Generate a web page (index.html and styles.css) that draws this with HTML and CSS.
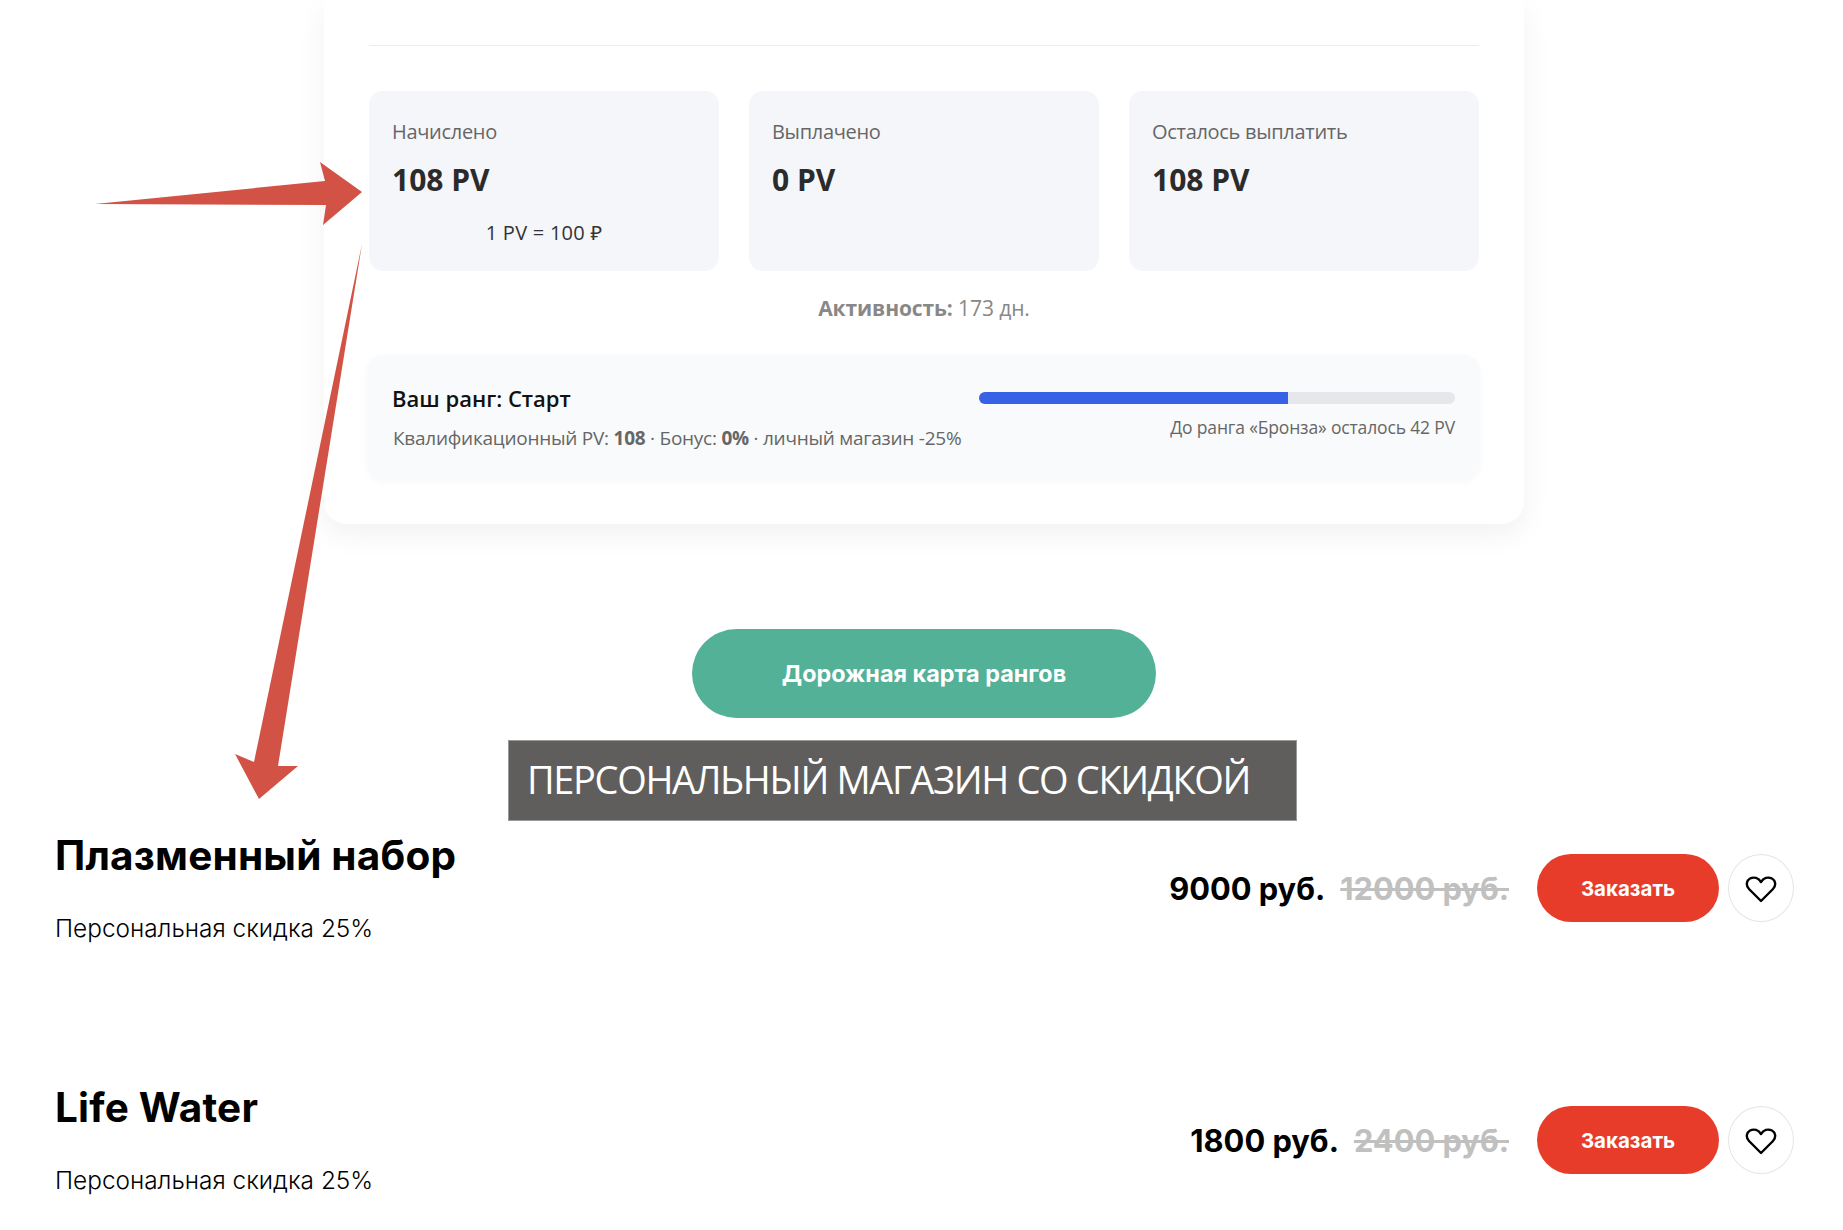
FILE: index.html
```html
<!DOCTYPE html>
<html lang="ru">
	<head>
		<meta charset="utf-8" />
		<title>Личный кабинет</title>
		<link rel="stylesheet" href="styles.css">
	</head>

	<body>
		<div id="page">
			<div class="account">
				<div class="divider"></div>
				<ul class="stats">
					<li class="stat">
						<span class="stat-label">Начислено</span>
						<span class="stat-value">108 PV</span>
						<span class="stat-note">1 PV = 100 ₽</span>
					</li>
					<li class="stat">
						<span class="stat-label">Выплачено</span>
						<span class="stat-value">0 PV</span>
					</li>
					<li class="stat">
						<span class="stat-label">Осталось выплатить</span>
						<span class="stat-value">108 PV</span>
					</li>
				</ul>
				<p class="activity"><b>Активность:</b> 173 дн.</p>
				<div class="rank">
					<div class="rank-info">
						<div class="rank-title">Ваш ранг: Старт</div>
						<div class="rank-text">Квалификационный PV: <b>108</b> · Бонус: <b>0%</b> · личный магазин -25%</div>
					</div>
					<div class="rank-progress">
						<div class="bar"><div class="bar-fill" style="width: 65%"></div></div>
						<div class="rank-left">До ранга «Бронза» осталось 42 PV</div>
					</div>
				</div>
			</div>

			<a class="roadmap" href="#">Дорожная карта рангов</a>
			<div class="shop-label">ПЕРСОНАЛЬНЫЙ МАГАЗИН СО СКИДКОЙ</div>

			<div class="product">
				<div class="product-info">
					<h2>Плазменный набор</h2>
					<p>Персональная скидка 25%</p>
				</div>
				<div class="product-buy">
					<span class="price">9000 руб.</span>
					<span class="price-old">12000 руб.</span>
					<a class="order" href="#">Заказать</a>
					<a class="like" href="#">
						<svg width="32" height="28" viewBox="0 0 32 28"><path d="M16 25L4 13C.5 9.500 1.500 4.500 5 2.500 9 .5 13.500 2 16 6 18.500 2 23 .5 27 2.500c3.500 2 4.500 7 1 10.500z" fill="none" stroke="#000" stroke-width="2.4" stroke-linejoin="round"/></svg>
					</a>
				</div>
			</div>

			<div class="product">
				<div class="product-info">
					<h2>Life Water</h2>
					<p>Персональная скидка 25%</p>
				</div>
				<div class="product-buy">
					<span class="price">1800 руб.</span>
					<span class="price-old">2400 руб.</span>
					<a class="order" href="#">Заказать</a>
					<a class="like" href="#">
						<svg width="32" height="28" viewBox="0 0 32 28"><path d="M16 25L4 13C.5 9.500 1.500 4.500 5 2.500 9 .5 13.500 2 16 6 18.500 2 23 .5 27 2.500c3.500 2 4.500 7 1 10.500z" fill="none" stroke="#000" stroke-width="2.4" stroke-linejoin="round"/></svg>
					</a>
				</div>
			</div>

			<!-- annotation arrows drawn over the page -->
			<svg class="arrows" width="1843" height="1230" viewBox="0 0 1843 1230">
				<polygon points="95,204 325,181 320,162 362,192 323,225 326,205" />
				<polygon points="362,244 278,766 298,766 259,799 235,754 254,762" />
			</svg>
		</div>
	</body>
</html>
```

FILE: styles.css
```css
html,
body {
	margin: 0;
	padding: 0;
}
body {
	background: #fff;
	color: #000;
	font-family: "Inter", "Noto Sans", sans-serif;
}
ul {
	list-style-type: none;
	margin: 0;
	padding: 0;
}
a { text-decoration: none; }

#page {
	height: 1230px;
	overflow: hidden;
	position: relative;
}


/* Account card */
.account {
	background: #fff;
	border-radius: 0 0 22px 22px;
	box-shadow: 0 10px 30px rgba(0, 0, 0, .06);
	box-sizing: border-box;
	font-family: "Open Sans", "Noto Sans", sans-serif;
	height: 524px;
	margin-left: 324px;
	padding: 45px;
	width: 1200px;
}
.divider {
	background: #ececec;
	height: 1px;
}
.stats {
	display: flex;
	gap: 30px;
	margin-top: 45px;
}
.stat {
	background: #f5f6fa;
	border-radius: 14px;
	box-sizing: border-box;
	flex: 1;
	height: 180px;
	padding: 28px 23px 0;
}
.stat span { display: block; }
.stat-label {
	color: #666;
	font-size: 20px;
	letter-spacing: -.3px;
	line-height: 26px;
}
.stat-value {
	color: #2b2b2b;
	font-size: 30px;
	font-weight: 700;
	line-height: 40px;
	margin-top: 15px;
}
.stat-note {
	color: #333;
	font-size: 20px;
	letter-spacing: .25px;
	line-height: 26px;
	margin-top: 20px;
	text-align: center;
}
.activity {
	color: #888;
	font-size: 21px;
	letter-spacing: -.1px;
	line-height: 28px;
	margin: 23px 0 0;
	text-align: center;
}
.rank {
	background: #f9fafb;
	border-radius: 16px;
	box-shadow: 0 2px 6px rgba(0, 0, 0, .03);
	box-sizing: border-box;
	display: flex;
	height: 125px;
	justify-content: space-between;
	margin: 33px -1px 0 -2px;
	padding: 0 25px;
}
.rank-info { padding-top: 28px; }
.rank-title {
	color: #111;
	font-size: 22px;
	font-weight: 600;
	line-height: 30px;
}
.rank-text {
	color: #666;
	font-size: 19px;
	letter-spacing: -.25px;
	line-height: 26px;
	margin: 12px 0 0 1px;
}
.rank-progress {
	padding-top: 37px;
	width: 476px;
}
.bar {
	background: #e5e7eb;
	border-radius: 6px;
	height: 12px;
	overflow: hidden;
}
.bar-fill {
	background: #3862e6;
	height: 100%;
}
.rank-left {
	color: #666;
	font-size: 17.5px;
	letter-spacing: -.15px;
	line-height: 24px;
	margin-top: 11px;
	text-align: right;
}


/* Roadmap button and shop label */
.roadmap {
	align-items: center;
	background: #53b197;
	border-radius: 45px;
	color: #fff;
	display: flex;
	font-size: 23.4px;
	font-weight: 700;
	height: 89px;
	justify-content: center;
	margin: 105px 0 0 692px;
	width: 464px;
}
.shop-label {
	background: #5f5e5c;
	border: 1px solid #999;
	box-sizing: border-box;
	color: #fff;
	font-family: "Open Sans", "Noto Sans", sans-serif;
	font-size: 38px;
	height: 81px;
	letter-spacing: -1.35px;
	line-height: 76px;
	margin: 22px 0 0 508px;
	padding-left: 18px;
	width: 789px;
}


/* Products */
.product {
	display: flex;
	height: 252px;
	justify-content: space-between;
	padding: 0 49px 0 55px;
}
.product h2 {
	font-size: 40.5px;
	font-weight: 700;
	letter-spacing: .2px;
	line-height: 48px;
	margin: 11px 0 0;
}
.product p {
	font-size: 24.4px;
	font-weight: 300;
	line-height: 30px;
	margin: 33px 0 0;
}
.product-buy {
	align-items: center;
	display: flex;
	height: 68px;
	margin-top: 33px;
}
.price {
	font-size: 30.8px;
	font-weight: 700;
}
.price-old {
	color: #c0c0c0;
	font-size: 30.8px;
	font-weight: 700;
	margin-left: 15px;
	text-decoration: line-through;
}
.order {
	align-items: center;
	background: #e83c2b;
	border-radius: 34px;
	box-sizing: border-box;
	color: #fff;
	display: flex;
	font-size: 20.5px;
	font-weight: 700;
	height: 68px;
	justify-content: center;
	margin-left: 28px;
	padding-top: 1px;
	width: 182px;
}
.like {
	align-items: center;
	border: 1px solid #e5e5e5;
	border-radius: 50%;
	box-sizing: border-box;
	display: flex;
	height: 68px;
	justify-content: center;
	margin-left: 9px;
	padding-top: 3px;
	width: 66px;
}


/* Annotation arrows */
.arrows {
	left: 0;
	pointer-events: none;
	position: absolute;
	top: 0;
}
.arrows polygon { fill: #d25345; }
```
